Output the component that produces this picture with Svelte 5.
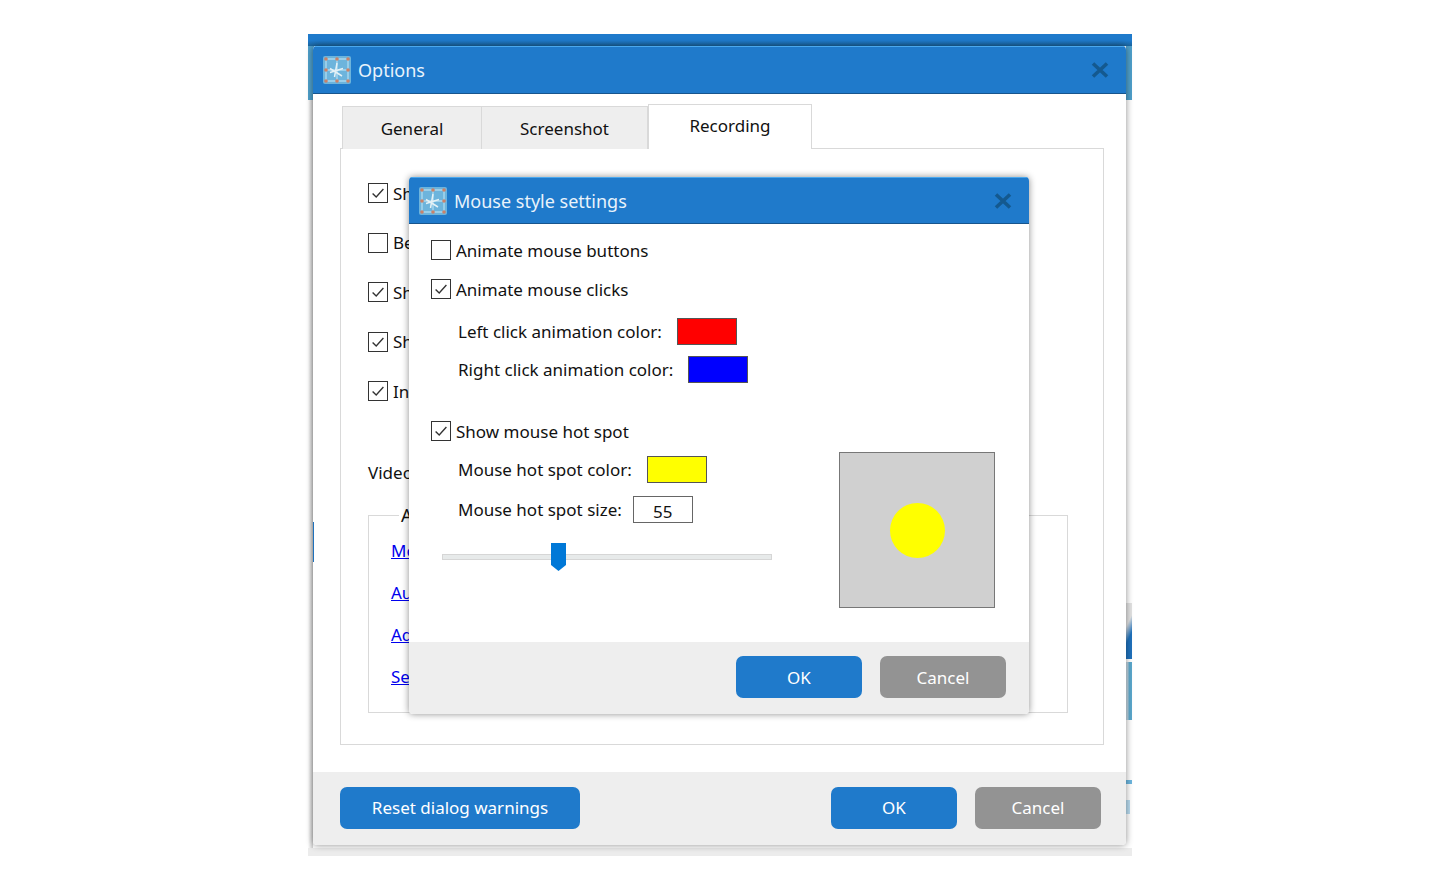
<script lang="ts">
  const options = [
    { label: "Show", on: true },
    { label: "Beep", on: false },
    { label: "Show", on: true },
    { label: "Show", on: true },
    { label: "Include", on: true },
  ];
  const links = ["Mouse", "Audio", "Add", "Select"];
  const tabs = ["General", "Screenshot", "Recording"];
  const hotSpotSize = 55;
  // slider range is a guess, only the thumb position matters here
  const thumbPct = 33;
</script>

{#snippet appIcon()}
  <svg class="app-icon" viewBox="0 0 30 30" aria-hidden="true">
    <rect x="1" y="1" width="28" height="28" rx="2" fill="#6db4dc" />
    <path d="M4 4H26V26H4ZM15 4V26M4 15H26" fill="none" stroke="#a9d8ee" stroke-width="1.4" />
    <path d="M8 17.5 L21 13.5 M8 13.5 L20 21 M15 8 L12.5 22" stroke="#e4f1f6" stroke-width="1.5" fill="none" />
    <g fill="#c9826a">
      <circle cx="4" cy="4" r="1.8" /><circle cx="15" cy="4" r="1.8" /><circle cx="26" cy="4" r="1.8" />
      <circle cx="4" cy="15" r="1.8" /><circle cx="26" cy="15" r="1.8" />
      <circle cx="4" cy="26" r="1.8" /><circle cx="15" cy="26" r="1.8" /><circle cx="26" cy="26" r="1.8" />
    </g>
  </svg>
{/snippet}

{#snippet closeIcon()}
  <svg class="close" viewBox="0 0 18 16" aria-hidden="true">
    <path d="M2 1.5 L16 14.5 M16 1.5 L2 14.5" stroke="#14598f" stroke-width="3.6" fill="none" />
  </svg>
{/snippet}

{#snippet check(on: boolean)}
  <span class="check">
    {#if on}
      <svg viewBox="0 0 20 20" aria-hidden="true">
        <path d="M4 10.5 L8 14.5 L16 5.5" fill="none" stroke="#333" stroke-width="1.5" />
      </svg>
    {/if}
  </span>
{/snippet}

<div class="desktop">
  <div class="backdrop">
    <div class="strip-top"></div>
    <div class="strip-left"></div>
    <div class="strip-right"></div>
    <div class="strip-bottom"></div>
    <div class="sliver sliver-left"></div>
    <div class="sliver sliver-blue"></div>
    <div class="sliver sliver-teal"></div>
    <div class="sliver sliver-line"></div>
  </div>

  <section class="window options">
    <header class="titlebar">
      {@render appIcon()}
      <span class="title">Options</span>
      {@render closeIcon()}
    </header>

    <div class="options-body">
      <div class="tabs">
        {#each tabs as tab, i}
          <div class="tab" class:active={i === 2}>{tab}</div>
        {/each}
      </div>
      <div class="panel">
        <div class="option-list">
          {#each options as opt}
            <div class="option">{@render check(opt.on)}<span>{opt.label}</span></div>
          {/each}
        </div>
        <div class="video-row">Video</div>
        <fieldset class="advanced">
          <legend>Advanced</legend>
          {#each links as link}
            <a href="#top">{link}</a>
          {/each}
        </fieldset>
      </div>
    </div>

    <footer class="footer options-footer">
      <button class="btn primary wide">Reset dialog warnings</button>
      <span class="spacer"></span>
      <button class="btn primary">OK</button>
      <button class="btn muted">Cancel</button>
    </footer>
  </section>

  <section class="window mouse">
    <header class="titlebar small">
      {@render appIcon()}
      <span class="title">Mouse style settings</span>
      {@render closeIcon()}
    </header>

    <div class="mouse-body">
      <div class="row">{@render check(false)}<span>Animate mouse buttons</span></div>
      <div class="row">{@render check(true)}<span>Animate mouse clicks</span></div>
      <div class="row sub">
        <span>Left click animation color:</span><span class="swatch red"></span>
      </div>
      <div class="row sub">
        <span>Right click animation color:</span><span class="swatch blue"></span>
      </div>

      <div class="hotspot">
        <div class="hotspot-left">
          <div class="row">{@render check(true)}<span>Show mouse hot spot</span></div>
          <div class="row sub">
            <span>Mouse hot spot color:</span><span class="swatch yellow"></span>
          </div>
          <div class="row sub size-row">
            <span>Mouse hot spot size:</span><span class="size-input">{hotSpotSize}</span>
          </div>
          <div class="slider">
            <div class="track"></div>
            <svg class="thumb" style="left: {thumbPct}%" viewBox="0 0 15 28" aria-hidden="true">
              <path d="M0 0H15V22L7.5 28L0 22Z" fill="#0078d7" />
            </svg>
          </div>
        </div>
        <div class="preview"><span class="spot"></span></div>
      </div>
    </div>

    <footer class="footer mouse-footer">
      <button class="btn primary">OK</button>
      <button class="btn muted">Cancel</button>
    </footer>
  </section>
</div>

<style>
  :global(body) {
    margin: 0;
    background: #fff;
  }

  .desktop {
    position: relative;
    width: 1438px;
    height: 891px;
    overflow: hidden;
    font-family: "Noto Sans", "Liberation Sans", sans-serif;
    font-size: 17px;
    color: #111;
  }

  .backdrop > div {
    position: absolute;
  }

  .strip-top {
    left: 308px;
    top: 34px;
    width: 824px;
    height: 12px;
    background: linear-gradient(#1f7acb 55%, #1a659f);
  }

  .strip-left,
  .strip-right {
    top: 46px;
    width: 6px;
    height: 54px;
    background: #4fa0cb;
  }

  .strip-left {
    left: 308px;
  }

  .strip-right {
    left: 1126px;
  }

  .strip-bottom {
    left: 308px;
    top: 848px;
    width: 824px;
    height: 8px;
    background: #ececec;
  }

  .sliver-left {
    left: 308px;
    top: 100px;
    width: 5px;
    height: 748px;
    background: linear-gradient(90deg, #fff, #cfcfcf);
  }

  .sliver-blue {
    left: 1126px;
    top: 603px;
    width: 6px;
    height: 56px;
    background: linear-gradient(115deg, #e3e3e3 35%, #1f72bd 60%);
  }

  .sliver-teal {
    left: 1126px;
    top: 662px;
    width: 6px;
    height: 58px;
    background: linear-gradient(90deg, #c9dbe6 20%, #5ba8cd 60%);
  }

  .sliver-line {
    left: 1126px;
    top: 780px;
    width: 6px;
    height: 4px;
    background: #6db7e0;
  }

  .sliver-line::after {
    content: "";
    position: absolute;
    left: 0;
    top: 20px;
    width: 4px;
    height: 14px;
    background: #b9dcf0;
  }

  .window {
    position: absolute;
    display: flex;
    flex-direction: column;
    background: #fff;
    border-radius: 4px;
    overflow: hidden;
    box-shadow: 0 0 7px rgba(0, 0, 0, 0.45);
  }

  .options {
    left: 313px;
    top: 46px;
    width: 813px;
    height: 799px;
  }

  .options::before {
    content: "";
    position: absolute;
    left: -1px;
    top: 476px;
    width: 2px;
    height: 40px;
    background: #1f72bd;
  }

  .mouse {
    left: 409px;
    top: 177px;
    width: 620px;
    height: 537px;
  }

  .titlebar {
    display: flex;
    align-items: center;
    flex: none;
    height: 48px;
    box-sizing: border-box;
    padding: 0 17px 0 9px;
    gap: 6px;
    background: #1f7acb;
    border-top: 1px solid #4aa8ee;
    border-bottom: 1px solid #17558d;
    color: #e9f3fb;
    font-size: 18px;
  }

  .titlebar.small {
    height: 47px;
  }

  .title {
    flex: 1;
  }

  .app-icon {
    width: 30px;
    height: 30px;
    flex: none;
  }

  .close {
    width: 18px;
    height: 16px;
    flex: none;
  }

  .options-body {
    flex: 1;
    padding: 10px 22px 27px 27px;
    display: flex;
    flex-direction: column;
  }

  .tabs {
    display: flex;
    align-items: flex-end;
    margin-left: 2px;
    height: 45px;
    position: relative;
    z-index: 1;
    margin-bottom: -1px;
  }

  .tab {
    height: 43px;
    box-sizing: border-box;
    display: flex;
    align-items: center;
    justify-content: center;
    background: #eee;
    border: 1px solid #d9d9d9;
    border-bottom: 0;
    width: 140px;
  }

  .tab + .tab {
    border-left: 0;
    width: 166px;
  }

  .tab.active {
    width: 164px;
    height: 45px;
    background: #fff;
    border-left: 1px solid #d9d9d9;
    padding-bottom: 4px;
  }

  .panel {
    flex: 1;
    border: 1px solid #d9d9d9;
    padding: 34px 35px 31px 27px;
    display: flex;
    flex-direction: column;
  }

  .option-list {
    display: flex;
    flex-direction: column;
    gap: 29.5px;
  }

  .option {
    display: flex;
    align-items: center;
    gap: 5px;
    height: 20px;
  }

  .video-row {
    margin-top: 60px;
    line-height: 24px;
  }

  .advanced {
    margin: 18px 0 0;
    padding: 12px 22px 0;
    border: 1px solid #d9d9d9;
    flex: 1;
    display: flex;
    flex-direction: column;
    gap: 18px;
    min-width: 0;
  }

  .advanced legend {
    padding: 0 2px;
    margin-left: 8px;
    line-height: 24px;
    font-size: 18px;
  }

  .advanced a {
    color: #0000ee;
    line-height: 24px;
  }

  .check {
    width: 20px;
    height: 20px;
    box-sizing: border-box;
    border: 1px solid #333;
    flex: none;
    display: block;
    background: #fff;
  }

  .check svg {
    display: block;
    width: 18px;
    height: 18px;
  }

  .footer {
    display: flex;
    align-items: center;
    flex: none;
    background: #eee;
    box-sizing: border-box;
  }

  .options-footer {
    height: 73px;
    padding: 0 25px 2px 27px;
    gap: 18px;
  }

  .spacer {
    flex: 1;
  }

  .mouse-footer {
    height: 72px;
    padding: 0 23px 2px 0;
    gap: 18px;
    justify-content: flex-end;
  }

  .btn {
    width: 126px;
    height: 42px;
    border: 0;
    border-radius: 7px;
    color: #fff;
    font: inherit;
    padding: 0;
  }

  .btn.wide {
    width: 240px;
  }

  .primary {
    background: #1f7acb;
  }

  .muted {
    background: #939393;
  }

  .mouse-body {
    flex: 1;
    padding: 16px 34px 0 22px;
    display: flex;
    flex-direction: column;
  }

  .row {
    display: flex;
    align-items: center;
    gap: 5px;
    height: 20px;
    margin-bottom: 19px;
    white-space: nowrap;
  }

  .row.sub {
    padding-left: 27px;
    gap: 15px;
    height: 27px;
    margin-bottom: 11px;
  }

  .swatch {
    width: 60px;
    height: 27px;
    box-sizing: border-box;
    border: 1px solid #555;
  }

  .red {
    background: #f00;
  }

  .blue {
    background: #00f;
  }

  .yellow {
    background: #ff0;
  }

  .hotspot {
    display: flex;
    justify-content: space-between;
    margin-top: 27px;
  }

  .hotspot-left {
    width: 341px;
  }

  .hotspot-left .row {
    margin-bottom: 15px;
  }

  .hotspot-left .row.sub {
    margin-bottom: 13px;
  }

  .size-row {
    gap: 11px !important;
  }

  .size-input {
    width: 60px;
    height: 27px;
    box-sizing: border-box;
    border: 1px solid #666;
    text-align: center;
    line-height: 29px;
  }

  .slider {
    position: relative;
    margin: 20px 0 0 11px;
    width: 330px;
    height: 28px;
    display: flex;
    align-items: center;
  }

  .track {
    width: 100%;
    height: 6px;
    box-sizing: border-box;
    background: #e7eaea;
    border: 1px solid #d6d6d6;
  }

  .thumb {
    position: absolute;
    top: 0;
    width: 15px;
    height: 28px;
  }

  .preview {
    width: 156px;
    height: 156px;
    box-sizing: border-box;
    margin-top: 31px;
    border: 1px solid #777;
    background: #d0d0d0;
    position: relative;
  }

  .spot {
    position: absolute;
    left: 50px;
    top: 50px;
    width: 55px;
    height: 55px;
    border-radius: 50%;
    background: #ff0;
  }
</style>
